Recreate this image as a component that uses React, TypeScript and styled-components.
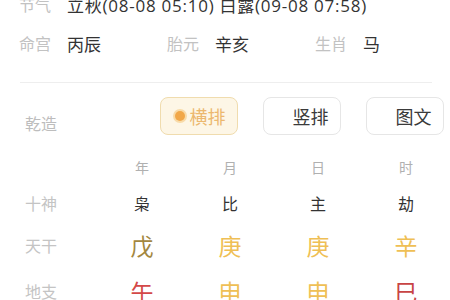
import React from 'react';
import styled, { createGlobalStyle } from 'styled-components';

const GlobalStyle = createGlobalStyle`
  html, body {
    margin: 0;
    padding: 0;
    background: #fff;
    overflow: hidden;
  }
  body {
    font-family: "Noto Sans CJK SC", "Noto Sans", sans-serif;
  }
`;

const Page = styled.div`
  width: 450px;
  height: 300px;
  overflow: hidden;
`;

const Info = styled.div`
  margin-top: -7px;
  padding-left: 19px;
  display: flex;
  flex-direction: column;
  gap: 17px;
`;

const InfoRow = styled.div`
  display: flex;
  height: 22px;
  align-items: center;
`;

const InfoCell = styled.div<{ $w?: number }>`
  display: flex;
  align-items: center;
  width: ${(p) => (p.$w ? `${p.$w}px` : 'auto')};
`;

const Label = styled.span`
  width: 48px;
  font-size: 16px;
  color: #c2c2c2;
  flex-shrink: 0;
`;

const Value = styled.span<{ $spaced?: boolean }>`
  font-family: "Open Sans", "Noto Sans CJK SC", sans-serif;
  font-size: 17px;
  color: #333;
  white-space: nowrap;
  letter-spacing: ${(p) => (p.$spaced ? '0.75px' : '0')};
`;

const Divider = styled.div`
  margin: 28px 18px 0 20px;
  height: 1px;
  background: #eeeeee;
`;

const ModeRow = styled.div`
  display: flex;
  align-items: center;
  padding: 14px 6px 0 25px;
`;

const SideLabel = styled.span`
  font-size: 16px;
  color: #bdbdbd;
  padding-top: 13px;
`;

const Buttons = styled.div`
  margin-left: auto;
  display: flex;
  gap: 25px;
`;

const ModeButton = styled.div<{ $active?: boolean }>`
  width: 78px;
  height: 38px;
  box-sizing: border-box;
  border-radius: 8px;
  border: 1px solid ${(p) => (p.$active ? '#f0dcae' : '#e6e6e6')};
  background: ${(p) => (p.$active ? '#fdf6e6' : '#fff')};
  color: ${(p) => (p.$active ? '#ecb86e' : '#3a3a3a')};
  font-size: 18px;
  display: flex;
  align-items: center;
  justify-content: center;
  gap: 3px;
  padding-left: 2px;
`;

const Dot = styled.span<{ $show?: boolean }>`
  width: 10px;
  height: 10px;
  border-radius: 50%;
  background: ${(p) => (p.$show ? '#f1a84a' : 'transparent')};
  box-shadow: ${(p) => (p.$show ? '0 0 0 2px #f8dba9' : 'none')};
  margin-right: 2px;
`;

const Grid = styled.div`
  display: grid;
  grid-template-columns: 73px repeat(4, 88px);
  padding-left: 25px;
  margin-top: 22px;
`;

const GridRow = styled.div<{ $h: number }>`
  display: contents;
  & > * {
    height: ${(p) => p.$h}px;
  }
`;

const RowLabel = styled.div`
  display: flex;
  align-items: center;
  font-size: 16px;
  color: #c4c4c4;
`;

const Cell = styled.div<{ $size: number; $color: string }>`
  display: flex;
  align-items: center;
  justify-content: center;
  font-size: ${(p) => p.$size}px;
  color: ${(p) => p.$color};
`;

const heads = ['年', '月', '日', '时'];
const gods = ['枭', '比', '主', '劫'];
const stems = [
  { c: '戊', color: '#a3873f' },
  { c: '庚', color: '#efbf55' },
  { c: '庚', color: '#efbf55' },
  { c: '辛', color: '#efbf55' },
];
const branches = [
  { c: '午', color: '#d44848' },
  { c: '申', color: '#efbf55' },
  { c: '申', color: '#efbf55' },
  { c: '巳', color: '#c84444' },
];

export default function App() {
  return (
    <Page>
      <GlobalStyle />
      <Info>
        <InfoRow>
          <InfoCell>
            <Label>节气</Label>
            <Value $spaced>立秋(08-08 05:10) 白露(09-08 07:58)</Value>
          </InfoCell>
        </InfoRow>
        <InfoRow>
          <InfoCell $w={148}>
            <Label>命宫</Label>
            <Value>丙辰</Value>
          </InfoCell>
          <InfoCell $w={148}>
            <Label>胎元</Label>
            <Value>辛亥</Value>
          </InfoCell>
          <InfoCell>
            <Label>生肖</Label>
            <Value>马</Value>
          </InfoCell>
        </InfoRow>
      </Info>
      <Divider />
      <ModeRow>
        <SideLabel>乾造</SideLabel>
        <Buttons>
          <ModeButton $active>
            <Dot $show />
            横排
          </ModeButton>
          <ModeButton>
            <Dot />
            竖排
          </ModeButton>
          <ModeButton>
            <Dot />
            图文
          </ModeButton>
        </Buttons>
      </ModeRow>
      <Grid>
        <GridRow $h={20}>
          <RowLabel />
          {heads.map((h) => (
            <Cell key={h} $size={14} $color="#b0b0b0">
              {h}
            </Cell>
          ))}
        </GridRow>
        <GridRow $h={52}>
          <RowLabel>十神</RowLabel>
          {gods.map((g) => (
            <Cell key={g} $size={16} $color="#333">
              {g}
            </Cell>
          ))}
        </GridRow>
        <GridRow $h={32}>
          <RowLabel>天干</RowLabel>
          {stems.map((s, i) => (
            <Cell key={i} $size={23} $color={s.color}>
              {s.c}
            </Cell>
          ))}
        </GridRow>
        <GridRow $h={60}>
          <RowLabel>地支</RowLabel>
          {branches.map((b, i) => (
            <Cell key={i} $size={23} $color={b.color}>
              {b.c}
            </Cell>
          ))}
        </GridRow>
      </Grid>
    </Page>
  );
}
